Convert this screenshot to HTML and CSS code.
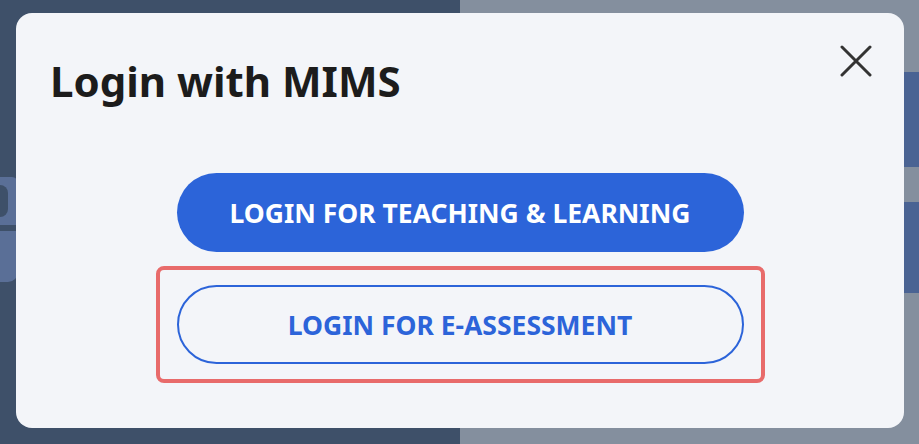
FILE: index.html
```html
<!DOCTYPE html>
<html lang="en">
<head>
<meta charset="utf-8">
<title>Login with MIMS</title>
<link rel="stylesheet" href="styles.css">
</head>
<body>
<div class="backdrop" aria-hidden="true">
  <div class="pane-left">
    <div class="glyph">
      <div class="glyph-top"><div class="glyph-counter"></div></div>
      <div class="glyph-gap"></div>
      <div class="glyph-bottom"></div>
    </div>
  </div>
  <div class="pane-right">
    <div class="bg-block bg-block-1"></div>
    <div class="bg-block bg-block-2"></div>
  </div>
</div>
<div class="modal" role="dialog" aria-label="Login with MIMS">
  <div class="modal-head">
    <h1 class="modal-title">Login with MIMS</h1>
    <button class="close" aria-label="Close">
      <svg width="32" height="32" viewBox="0 0 32 32"><path d="M2 2 L30 30 M30 2 L2 30" stroke="#333" stroke-width="3" stroke-linecap="round" fill="none"/></svg>
    </button>
  </div>
  <div class="actions">
    <button class="btn btn-solid">LOGIN FOR TEACHING &amp; LEARNING</button>
    <div class="highlight">
      <button class="btn btn-outline">LOGIN FOR E-ASSESSMENT</button>
    </div>
  </div>
</div>
</body>
</html>
```
FILE: styles.css
```css
* { box-sizing: border-box; }
html, body { margin: 0; padding: 0; }
body {
  width: 919px;
  height: 444px;
  overflow: hidden;
  position: relative;
  font-family: "Noto Sans", "Open Sans", sans-serif;
}
.backdrop {
  display: grid;
  grid-template-columns: 460px 1fr;
  height: 444px;
}
.pane-left {
  background: #3e5069;
  padding-top: 177px;
}
.glyph {
  display: flex;
  flex-direction: column;
  width: 18px;
}
.glyph-top {
  height: 48px;
  background: #5a6f97;
  border-top-right-radius: 6px;
  display: flex;
  align-items: center;
}
.glyph-counter {
  width: 8px;
  height: 32px;
  background: #3e5069;
  border-radius: 0 10px 10px 0;
}
.glyph-gap { height: 6px; }
.glyph-bottom {
  height: 51px;
  background: #5a6f97;
  border-bottom-right-radius: 10px;
}
.pane-right {
  background: #848f9e;
  display: flex;
  flex-direction: column;
  align-items: flex-end;
  padding-top: 72px;
  gap: 35px;
}
.bg-block {
  width: 60px;
  background: #4a6393;
  border-radius: 12px 0 0 12px;
}
.bg-block-1 { height: 95px; }
.bg-block-2 { height: 91px; }

.modal {
  position: absolute;
  left: 16px;
  top: 13px;
  width: 888px;
  height: 415px;
  background: #f3f5f9;
  border-radius: 16px;
  padding: 32px 32px 0 34px;
}
.modal-head {
  display: flex;
  justify-content: space-between;
  align-items: flex-start;
}
.modal-title {
  margin: 12px 0 0 0;
  font-size: 42px;
  font-weight: 700;
  line-height: 48px;
  color: #1c1c1c;
}
.close {
  border: 0;
  background: transparent;
  padding: 0;
  width: 32px;
  height: 32px;
  cursor: pointer;
  display: flex;
}
.actions {
  display: flex;
  flex-direction: column;
  align-items: center;
  margin-top: 68px;
  padding-right: 2px;
  gap: 14px;
}
.btn {
  width: 567px;
  height: 79px;
  border-radius: 40px;
  font-family: "Noto Sans", "Open Sans", sans-serif;
  font-weight: 700;
  font-size: 26.5px;
  cursor: pointer;
}
.btn-solid {
  background: #2c64d9;
  color: #ffffff;
  border: 0;
}
.btn-outline {
  background: transparent;
  color: #2c64d9;
  border: 2px solid #2c64d9;
}
.highlight {
  border: 4px solid #e86b6b;
  border-radius: 8px;
  padding: 15px 17px;
}
```
